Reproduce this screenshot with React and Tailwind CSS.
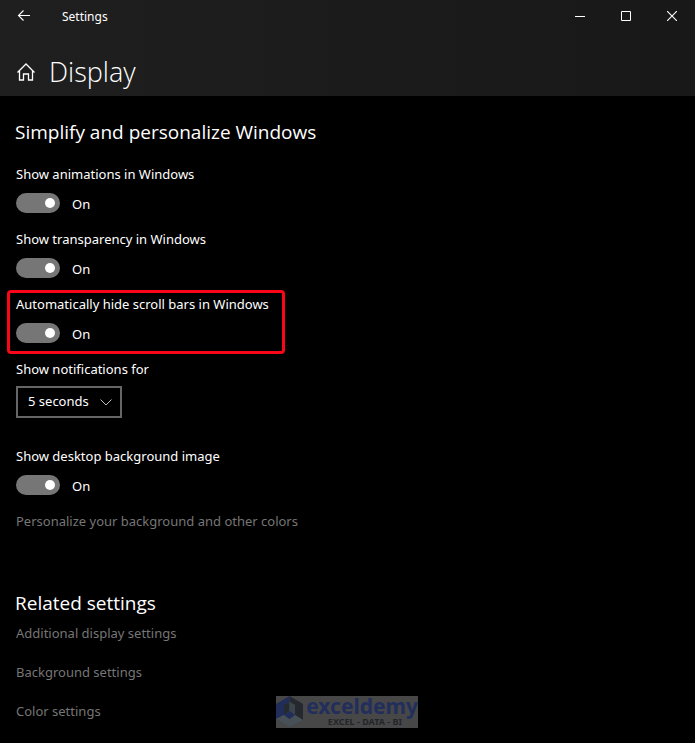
import React, { useState } from 'react';

const RELATED_LINKS = ['Additional display settings', 'Background settings', 'Color settings'];

const SettingToggle = ({ id, label, highlighted }) => {
  const [on, setOn] = useState(true);

  return (
    <div className="relative">
      <label htmlFor={id} className="block w-fit leading-5">{label}</label>
      <div className="mt-2 flex h-[22px] items-center gap-3">
        <input
          id={id}
          type="checkbox"
          role="switch"
          checked={on}
          onChange={(e) => setOn(e.target.checked)}
          className="flex h-5 w-11 appearance-none items-center rounded-full bg-[#767676] px-[5px] before:size-[10px] before:rounded-full before:bg-white checked:justify-end"
        />
        <span className="pt-0.5 leading-5">{on ? 'On' : 'Off'}</span>
      </div>
      {highlighted && (
        <div className="pointer-events-none absolute -top-1 -left-[9px] h-16 w-[278px] rounded-[4px] border-3 border-[#fb0519]" />
      )}
    </div>
  );
};

const TitleBar = () => (
  <div className="flex h-8 items-center">
    <button aria-label="Back" className="flex h-8 w-12 items-center justify-center">
      <svg width="14" height="12" viewBox="0 0 14 12" fill="none" stroke="currentColor" strokeWidth="1.1">
        <path d="M13 5.5H1.5M6.5.5l-5 5 5 5" />
      </svg>
    </button>
    <span className="ml-[14px] pt-0.5 text-xs">Settings</span>
    <div className="ml-auto flex">
      <button aria-label="Minimize" className="flex h-8 w-[46px] items-center justify-center">
        <svg width="10" height="10" viewBox="0 0 10 10" fill="none" stroke="currentColor">
          <path d="M0 5.5h10" />
        </svg>
      </button>
      <button aria-label="Maximize" className="flex h-8 w-[46px] items-center justify-center">
        <svg width="10" height="10" viewBox="0 0 10 10" fill="none" stroke="currentColor">
          <path d="M.5.5h9v9h-9z" />
        </svg>
      </button>
      <button aria-label="Close" className="flex h-8 w-[46px] items-center justify-center">
        <svg width="10" height="10" viewBox="0 0 10 10" fill="none" stroke="currentColor" strokeWidth="1.1">
          <path d="M0 0l10 10M10 0L0 10" />
        </svg>
      </button>
    </div>
  </div>
);

const Watermark = () => (
  <div className="flex h-8 w-[142px] items-center bg-[#474747]">
    <svg className="shrink-0" width="28" height="32" viewBox="0 0 28 32">
      <path d="M13.5 0L27 8v16l-8-5V9l-5.5-3z" fill="#25292f" />
      <path d="M13.5 0L0 8v15l8-4V9l5.5-3z" fill="#1f2d58" />
      <path d="M0 23l8-4 5.5 4 5.5-4 8 5-13.5 7z" fill="#465056" />
      <path d="M13.5 6L8 9v10l5.5-4z" fill="#252a30" />
      <path d="M13.5 6L19 9v10l-5.5-4z" fill="#3b444a" />
      <path d="M13.5 15l5.5 4-5.5 4L8 19z" fill="#1f2d58" />
    </svg>
    <div className="flex flex-1 flex-col items-end">
      <span className="text-[21px] leading-5 font-bold text-[#222e5c]">exceldemy</span>
      <span className="pr-4 text-[9px] leading-3 font-bold text-[#222529]">EXCEL - DATA - BI</span>
    </div>
  </div>
);

const App = () => {
  const [duration, setDuration] = useState('5 seconds');

  return (
    <div className="flex min-h-screen flex-col bg-black font-['Noto_Sans',sans-serif] text-[13px] text-white">
      <header className="h-24 bg-linear-to-r from-[#1f1f1f] to-[#181818]">
        <TitleBar />
        <div className="flex h-20 items-center gap-[14px] px-[17px]">
          <a href="#home" aria-label="Home">
            <svg width="18" height="18" viewBox="0 0 18 18" fill="none" stroke="currentColor" strokeWidth="1.3">
              <path d="M.5 9.5L9 1l8.5 8.5M2.5 8v9h4v-6h5v6h4V8" />
            </svg>
          </a>
          <h1 className="font-['Open_Sans',sans-serif] text-[27px] font-light">Display</h1>
        </div>
      </header>

      <main className="px-4 pt-5">
        <h2 className="-ml-px font-['Open_Sans',sans-serif] text-[19px] leading-8">Simplify and personalize Windows</h2>

        <div className="mt-4 flex flex-col gap-[15px]">
          <SettingToggle id="animations" label="Show animations in Windows" />
          <SettingToggle id="transparency" label="Show transparency in Windows" />
          <SettingToggle id="scrollbars" label="Automatically hide scroll bars in Windows" highlighted />

          <div className="mb-[13px]">
            <label htmlFor="duration" className="block w-fit leading-5">Show notifications for</label>
            <div className="mt-[7px] grid w-[106px] items-center">
              <select
                id="duration"
                value={duration}
                onChange={(e) => setDuration(e.target.value)}
                className="col-start-1 row-start-1 h-8 appearance-none border-2 border-[#666] bg-black pl-[10px]"
              >
                <option>5 seconds</option>
                <option>7 seconds</option>
                <option>15 seconds</option>
              </select>
              <svg className="pointer-events-none col-start-1 row-start-1 mr-[10px] justify-self-end" width="12" height="7" viewBox="0 0 12 7" fill="none" stroke="#bbb">
                <path d="M.5.5L6 6 11.5.5" />
              </svg>
            </div>
          </div>

          <SettingToggle id="background" label="Show desktop background image" />
          <a href="#personalize" className="w-fit leading-5 text-[#767676]">Personalize your background and other colors</a>
        </div>

        <h2 className="mt-14 -ml-px font-['Open_Sans',sans-serif] text-[19px] leading-8">Related settings</h2>
        <ul className="mt-1 flex flex-col gap-[19px]">
          {RELATED_LINKS.map((link) => (
            <li key={link} className="leading-5">
              <a href="#related" className="text-[#767676]">{link}</a>
            </li>
          ))}
        </ul>
      </main>

      <div className="pointer-events-none absolute top-[696px] left-[276px]">
        <Watermark />
      </div>
    </div>
  );
};

export default App;
